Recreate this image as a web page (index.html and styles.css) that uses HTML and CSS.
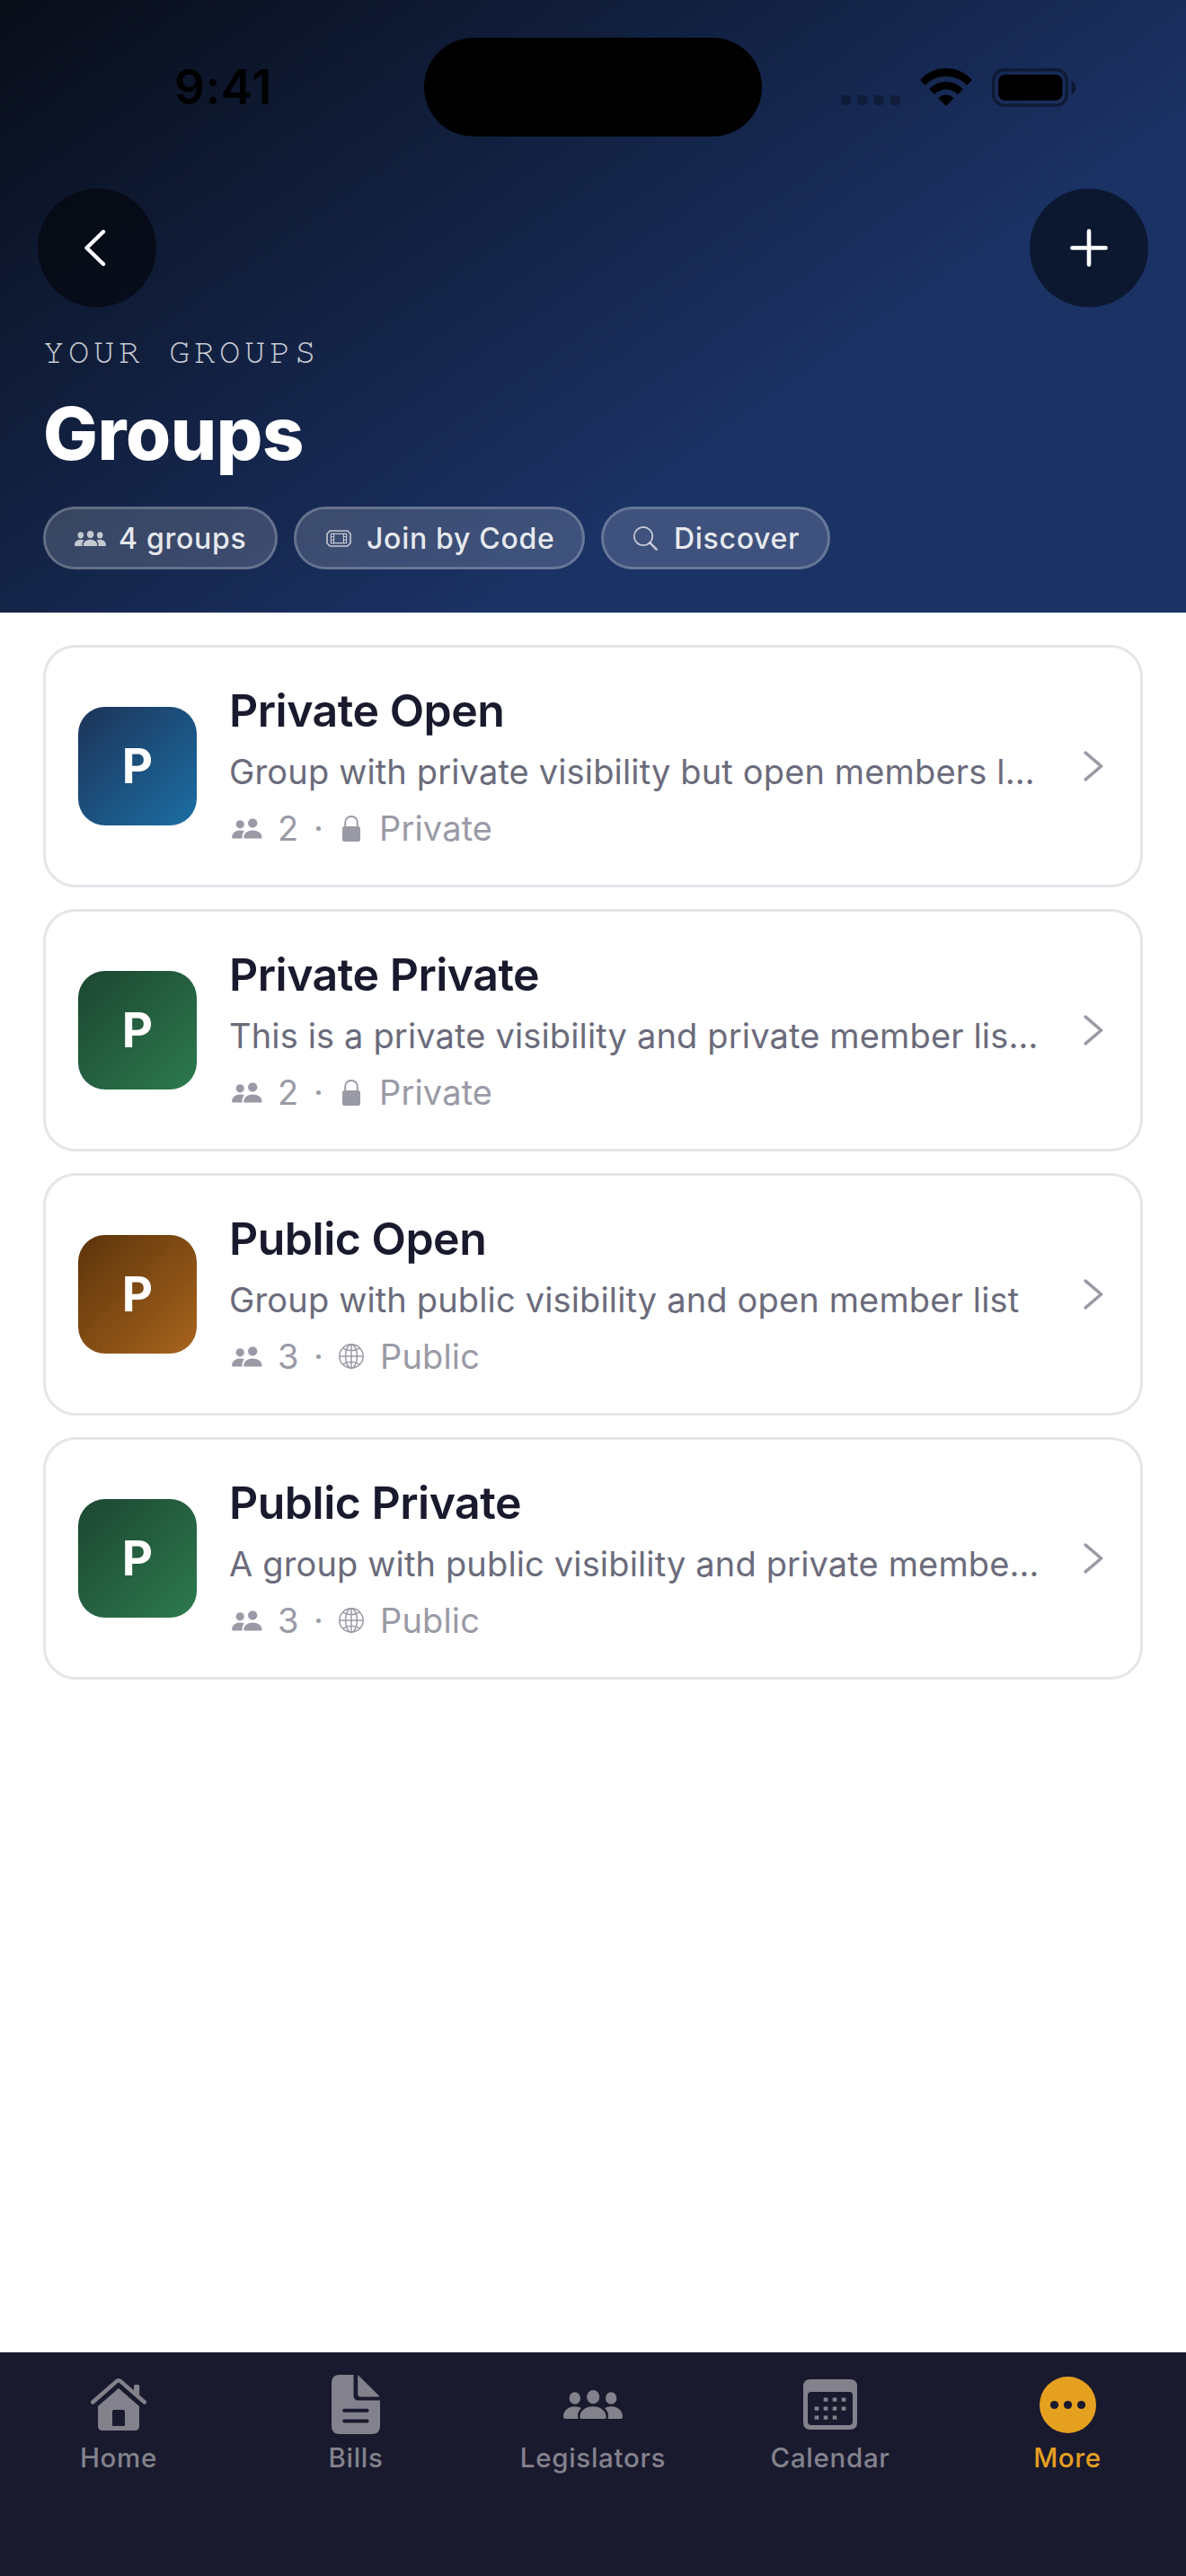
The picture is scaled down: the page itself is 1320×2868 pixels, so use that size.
FILE: index.html
```html
<!DOCTYPE html>
<html lang="en">
<head>
    <meta charset="utf-8">
    <title>Groups</title>
    <link rel="stylesheet" href="styles.css">
</head>
<body>
    <!-- shared icons -->
    <svg class="icon-defs">
        <symbol id="icon-people3" viewBox="0 0 198 96">
            <ellipse cx="38.5" cy="27" rx="18.5" ry="20.5"/>
            <ellipse cx="99.5" cy="23" rx="21" ry="23"/>
            <ellipse cx="159.5" cy="27" rx="18.5" ry="20.5"/>
            <path d="M5 96Q0 96 0 88C1 68 17 55 38 55Q51 55 60 60C52 67 47 78 48 88Q48 93 50 96Z"/>
            <path d="M61 96Q54 96 55 88C57 69 74 55 99 55S141 69 143 88Q144 96 137 96Z"/>
            <path d="M193 96Q198 96 198 88C197 68 181 55 160 55Q147 55 138 60C146 67 151 78 150 88Q150 93 148 96Z"/>
        </symbol>
        <symbol id="icon-people2" viewBox="0 0 34 23">
            <circle cx="9.2" cy="6.8" r="4.6"/>
            <circle cx="23.2" cy="5.4" r="5.2"/>
            <path d="M1.4 22.6Q0 22.6 .1 20.8C.6 16.4 4.3 13.5 9 13.5Q11.8 13.5 14 14.6C12 16.6 11.2 19 11.6 22.6Z"/>
            <path d="M14.6 22.6Q13 22.6 13.2 20.8C13.8 16.4 17.8 13.5 23.3 13.5S33 16.4 33.6 20.8Q33.6 22.6 32.4 22.6Z"/>
        </symbol>
        <symbol id="icon-lock" viewBox="0 0 20 29">
            <path d="M3.2 13V8.5C3.2 3.8 6 1 10 1S16.8 3.8 16.8 8.5V13" fill="none" stroke="currentColor" stroke-width="1.9"/>
            <rect y="12" width="20" height="17" rx="2.6"/>
        </symbol>
        <symbol id="icon-globe" viewBox="0 0 28 28">
            <g fill="none" stroke="currentColor" stroke-width="1.5">
                <circle cx="14" cy="14" r="13.2"/>
                <ellipse cx="14" cy="14" rx="6.4" ry="13.2"/>
                <path d="M14 1v26M1 14h26M4.8 5.2Q14 10.2 23.2 5.2M4.8 22.8Q14 17.8 23.2 22.8"/>
            </g>
        </symbol>
        <symbol id="icon-chevron" viewBox="0 0 22 34">
            <path d="M2.2 2.2L19.6 17L2.2 31.8" fill="none" stroke="currentColor" stroke-width="3.6" stroke-linecap="round" stroke-linejoin="round"/>
        </symbol>
    </svg>

    <div id="app">
        <header id="header">
            <div id="status-bar">
                <div class="time">9:41</div>
                <div class="island"></div>
                <div class="status-icons">
                    <svg class="signal" width="66" height="11" viewBox="0 0 66 11">
                        <rect width="11" height="11" rx="3.4"/>
                        <rect x="18.2" width="11" height="11" rx="3.4"/>
                        <rect x="36.4" width="11" height="11" rx="3.4"/>
                        <rect x="54.6" width="11" height="11" rx="3.4"/>
                    </svg>
                    <svg class="wifi" width="58" height="42" viewBox="0 0 58 42">
                        <path d="M0 13C16 -4.3 42 -4.3 58 13L52.3 18.9C39.3 5.7 18.7 5.7 5.7 18.9Z"/>
                        <path d="M10.2 23.2C20.5 12.2 37.5 12.2 47.8 23.2L42.2 29C34.8 21.5 23.2 21.5 15.8 29Z"/>
                        <path d="M20.3 33.5C25.1 28 32.9 28 37.7 33.5L29 42Z"/>
                    </svg>
                    <svg class="battery" width="94" height="43" viewBox="0 0 94 43">
                        <rect x="1.7" y="1.7" width="81.6" height="39.6" rx="12" fill="none" stroke="#000" stroke-opacity=".4" stroke-width="3.4"/>
                        <path d="M88.5 14Q93.5 16 93.5 21.5T88.5 29Z" fill-opacity=".45"/>
                        <rect x="7" y="7" width="71.5" height="29" rx="8"/>
                    </svg>
                </div>
            </div>
            <div class="nav-row">
                <button class="round-btn">
                    <svg width="26" height="42" viewBox="0 0 26 42"><path d="M23 3L4.5 21L23 39" fill="none" stroke="#fff" stroke-width="4.4" stroke-linecap="round" stroke-linejoin="round"/></svg>
                </button>
                <button class="round-btn">
                    <svg width="42" height="42" viewBox="0 0 42 42"><path d="M21 2.4V39.6M2.4 21H39.6" fill="none" stroke="#fff" stroke-width="4.6" stroke-linecap="round"/></svg>
                </button>
            </div>
            <div class="eyebrow">YOUR GROUPS</div>
            <h1>Groups</h1>
            <div class="pills">
                <div class="pill pill-count">
                    <svg width="35" height="17"><use href="#icon-people3"/></svg>
                    <span>4 groups</span>
                </div>
                <div class="pill pill-join">
                    <svg width="28" height="19" viewBox="0 0 28 19" fill="none" stroke="currentColor">
                        <path d="M4.2 1H23.8L27 4.2V14.8L23.8 18H4.2L1 14.8V4.2Z" stroke-width="1.6" stroke-linejoin="round"/>
                        <path d="M5.4 4.4H22.6V14.6H5.4Z M8.6 4.4V14.6M19.4 4.4V14.6" stroke-width="1.1"/>
                        <path d="M5.4 7.6h3M5.4 11.2h3M19.6 7.6h3M19.6 11.2h3" stroke-width="1"/>
                    </svg>
                    <span>Join by Code</span>
                </div>
                <div class="pill pill-discover">
                    <svg width="27" height="27" viewBox="0 0 27 27" fill="none" stroke="currentColor" stroke-linecap="round">
                        <circle cx="11" cy="11" r="10.2" stroke-width="1.7"/>
                        <path d="M18.6 18.6L25.6 25.6" stroke-width="2.5"/>
                    </svg>
                    <span>Discover</span>
                </div>
            </div>
        </header>

        <main id="group-list">
            <div class="card">
                <div class="avatar blue">P</div>
                <div class="info">
                    <div class="name">Private Open</div>
                    <div class="desc">Group with private visibility but open members l…</div>
                    <div class="meta">
                        <svg class="people" width="34" height="23"><use href="#icon-people2"/></svg>
                        <span class="count">2</span>
                        <span class="dot">·</span>
                        <svg class="lock" width="20" height="29"><use href="#icon-lock"/></svg>
                        <span>Private</span>
                    </div>
                </div>
                <svg class="chevron" width="22" height="34"><use href="#icon-chevron"/></svg>
            </div>
            <div class="card">
                <div class="avatar green">P</div>
                <div class="info">
                    <div class="name">Private Private</div>
                    <div class="desc">This is a private visibility and private member lis…</div>
                    <div class="meta">
                        <svg class="people" width="34" height="23"><use href="#icon-people2"/></svg>
                        <span class="count">2</span>
                        <span class="dot">·</span>
                        <svg class="lock" width="20" height="29"><use href="#icon-lock"/></svg>
                        <span>Private</span>
                    </div>
                </div>
                <svg class="chevron" width="22" height="34"><use href="#icon-chevron"/></svg>
            </div>
            <div class="card">
                <div class="avatar brown">P</div>
                <div class="info">
                    <div class="name">Public Open</div>
                    <div class="desc">Group with public visibility and open member list</div>
                    <div class="meta">
                        <svg class="people" width="34" height="23"><use href="#icon-people2"/></svg>
                        <span class="count">3</span>
                        <span class="dot">·</span>
                        <svg class="globe" width="28" height="28"><use href="#icon-globe"/></svg>
                        <span>Public</span>
                    </div>
                </div>
                <svg class="chevron" width="22" height="34"><use href="#icon-chevron"/></svg>
            </div>
            <div class="card">
                <div class="avatar green">P</div>
                <div class="info">
                    <div class="name">Public Private</div>
                    <div class="desc">A group with public visibility and private membe…</div>
                    <div class="meta">
                        <svg class="people" width="34" height="23"><use href="#icon-people2"/></svg>
                        <span class="count">3</span>
                        <span class="dot">·</span>
                        <svg class="globe" width="28" height="28"><use href="#icon-globe"/></svg>
                        <span>Public</span>
                    </div>
                </div>
                <svg class="chevron" width="22" height="34"><use href="#icon-chevron"/></svg>
            </div>
        </main>

        <nav id="tab-bar">
            <div class="tab">
                <div class="tab-icon">
                    <svg width="62" height="58" viewBox="0 0 62 58">
                        <path d="M2.2 26.5L28.6 3.3Q31 1.3 33.4 3.3L59.8 26.5" fill="none" stroke="currentColor" stroke-width="4.4" stroke-linecap="round"/>
                        <path d="M48 16V8.6Q48 7 49.6 7H52.6Q54.2 7 54.2 8.6V22Z"/>
                        <path d="M31 11L54 31V53Q54 58 49 58H13Q8 58 8 53V31ZM24 53H38V37Q38 35 36 35H26Q24 35 24 37Z" fill-rule="evenodd"/>
                    </svg>
                </div>
                <span>Home</span>
            </div>
            <div class="tab">
                <div class="tab-icon">
                    <svg width="54" height="66" viewBox="0 0 54 66">
                        <path d="M9 0H24.5V23Q24.5 28.5 30 28.5H54V57Q54 66 45 66H9Q0 66 0 57V9Q0 0 9 0ZM14.2 37.7A2 2 0 0 0 14.2 41.7H39.6A2 2 0 0 0 39.6 37.7ZM14.2 49.5A2 2 0 0 0 14.2 53.5H39.6A2 2 0 0 0 39.6 49.5Z" fill-rule="evenodd"/>
                        <path d="M29.2 .8Q29.2 0 30 .8L53 23.4Q53.6 24.4 52.6 24.4H32Q29.2 24.4 29.2 21.6Z"/>
                    </svg>
                </div>
                <span>Bills</span>
            </div>
            <div class="tab">
                <div class="tab-icon">
                    <svg width="66" height="32"><use href="#icon-people3"/></svg>
                </div>
                <span>Legislators</span>
            </div>
            <div class="tab">
                <div class="tab-icon">
                    <svg width="60" height="56" viewBox="0 0 60 56">
                        <path d="M8 0H52Q60 0 60 8V48Q60 56 52 56H8Q0 56 0 48V8Q0 0 8 0ZM9 14Q5 14 5 18V47Q5 51 9 51H51Q55 51 55 47V18Q55 14 51 14Z" fill-rule="evenodd"/>
                        <path d="M25 20.5v4.2M35 20.5v4.2M45 20.5v4.2M15 30.5v4.2M25 30.5v4.2M35 30.5v4.2M45 30.5v4.2M15 40.5v4.2M25 40.5v4.2M35 40.5v4.2" stroke="currentColor" stroke-width="4.6"/>
                    </svg>
                </div>
                <span>Calendar</span>
            </div>
            <div class="tab active">
                <div class="tab-icon">
                    <svg width="63" height="63" viewBox="0 0 63 63">
                        <circle cx="31.5" cy="31.5" r="31.5"/>
                        <g fill="#1a1a2e">
                            <circle cx="16.5" cy="31.5" r="4.6"/>
                            <circle cx="31.5" cy="31.5" r="4.6"/>
                            <circle cx="46.5" cy="31.5" r="4.6"/>
                        </g>
                    </svg>
                </div>
                <span>More</span>
            </div>
        </nav>
    </div>
</body>
</html>
```

FILE: styles.css
```css
* {
    box-sizing: border-box;
}

body {
    margin: 0;
    font-family: Inter, "Liberation Sans", sans-serif;
    background: #fff;
}

svg {
    display: block;
    flex-shrink: 0;
    fill: currentColor;
}

svg[fill="none"] {
    fill: none;
}

.icon-defs {
    display: none;
}

#app {
    width: 1320px;
    height: 2868px;
    display: flex;
    flex-direction: column;
    overflow: hidden;
}

/* header */
#header {
    height: 682px;
    background: linear-gradient(145deg, #080d18 0%, #1b3265 66%);
    color: #fff;
}

#status-bar {
    height: 210px;
    padding: 42px 122px 0 194px;
    display: flex;
    align-items: flex-start;
    justify-content: space-between;
    color: #000;
}

.time {
    width: 278px;
    font-size: 53px;
    line-height: 111px;
    font-weight: 600;
    letter-spacing: 0.5px;
}

.island {
    width: 376px;
    height: 110px;
    border-radius: 55px;
    background: #000;
}

.status-icons {
    width: 350px;
    height: 110px;
    padding-left: 88px;
    display: flex;
    align-items: center;
}

.signal {
    opacity: 0.28;
    margin-top: 29px;
}

.wifi {
    margin-left: 22px;
}

.battery {
    margin-left: 22px;
}

.nav-row {
    padding: 0 42px;
    display: flex;
    justify-content: space-between;
}

.round-btn {
    width: 132px;
    height: 132px;
    padding: 0;
    border: none;
    border-radius: 50%;
    background: rgba(0, 0, 0, 0.52);
    display: flex;
    align-items: center;
    justify-content: center;
}

.round-btn:first-child {
    padding-right: 6px;
}

.eyebrow {
    margin: 28px 48px 0;
    font-family: FreeMono, "Liberation Mono", monospace;
    font-size: 39px;
    line-height: 46px;
    letter-spacing: 4.6px;
    color: rgba(255, 255, 255, 0.78);
}

h1 {
    margin: 17px 48px 0;
    font-size: 81px;
    line-height: 100px;
    font-weight: 800;
    letter-spacing: -0.4px;
}

.pills {
    margin: 31px 48px 0;
    display: flex;
    gap: 18px;
}

.pill {
    height: 70px;
    padding-left: 32px;
    border: 3px solid rgba(255, 255, 255, 0.34);
    border-radius: 35px;
    background: rgba(255, 255, 255, 0.16);
    background-clip: padding-box;
    display: flex;
    align-items: center;
    gap: 14px;
    font-size: 32px;
    font-weight: 500;
    letter-spacing: 0.7px;
    color: rgba(255, 255, 255, 0.9);
    white-space: nowrap;
}

.pill svg {
    color: rgba(255, 255, 255, 0.7);
}

.pill-count {
    width: 261px;
}

.pill-join {
    width: 324px;
    padding-left: 33px;
    gap: 17px;
}

.pill-discover {
    width: 255px;
    padding-left: 33px;
    gap: 18px;
}

/* group cards */
#group-list {
    flex: 1;
    padding: 36px 48px;
    display: flex;
    flex-direction: column;
    gap: 24px;
}

.card {
    height: 270px;
    padding: 0 41px 0 36px;
    border: 3px solid #e5e5ea;
    border-radius: 36px;
    display: flex;
    align-items: center;
}

.avatar {
    width: 132px;
    height: 132px;
    border-radius: 30px;
    flex-shrink: 0;
    font-size: 53px;
    line-height: 132px;
    font-weight: 700;
    text-align: center;
    color: #fff;
}

.blue {
    background: linear-gradient(135deg, #1c3358, #1c6ea4);
}

.green {
    background: linear-gradient(135deg, #1c4631, #2d7a4e);
}

.brown {
    background: linear-gradient(135deg, #5c330a, #a8651d);
}

.info {
    flex: 1;
    margin-left: 36px;
    white-space: nowrap;
}

.name {
    font-size: 50px;
    line-height: 60px;
    font-weight: 600;
    letter-spacing: -0.5px;
    color: #1a1a2e;
}

.desc {
    margin-top: 15px;
    font-size: 38px;
    line-height: 46px;
    letter-spacing: 0.15px;
    color: #6b6b7b;
}

.meta {
    margin-top: 17px;
    padding-left: 3px;
    display: flex;
    align-items: center;
    font-size: 38px;
    line-height: 46px;
    letter-spacing: 0.15px;
    color: #9a9aa6;
}

.count {
    width: 40px;
    margin-left: 17px;
}

.dot {
    width: 23px;
}

.lock {
    margin: 0 21px 0 9px;
}

.globe {
    margin: 0 18px 0 5px;
}

.chevron {
    color: #9a9aa6;
}

/* bottom tabs */
#tab-bar {
    height: 249px;
    padding-top: 25px;
    background: #1a1a2e;
    display: grid;
    grid-template-columns: repeat(5, 1fr);
}

.tab {
    display: flex;
    flex-direction: column;
    align-items: center;
    gap: 8px;
    font-size: 29.5px;
    line-height: 36px;
    font-weight: 500;
    letter-spacing: 0.7px;
    color: #83828c;
}

.tab-icon {
    height: 66px;
    display: flex;
    align-items: center;
}

.active {
    color: #e6a020;
}
```
